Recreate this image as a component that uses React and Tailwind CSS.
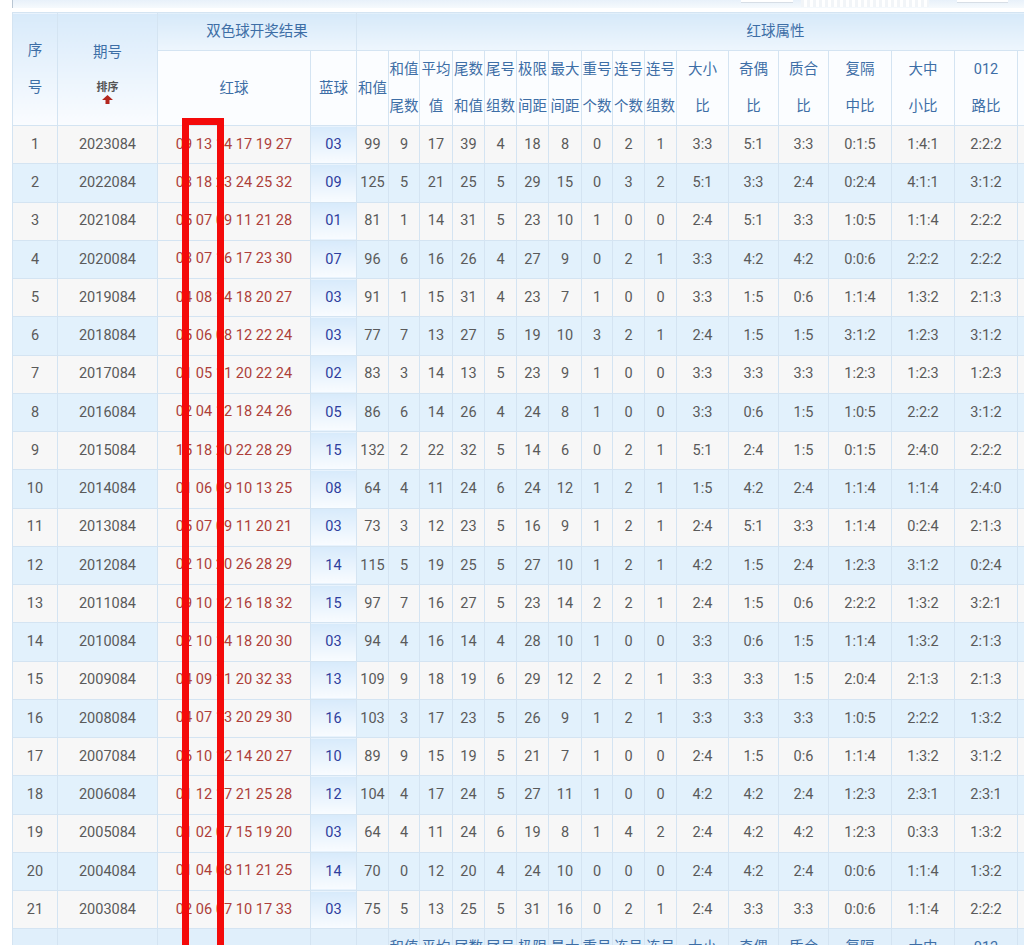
import React from "react";

const rows = [
  [1, "2023084", "09 13 14 17 19 27", "03", 99, 9, 17, 39, 4, 18, 8, 0, 2, 1, "3:3", "5:1", "3:3", "0:1:5", "1:4:1", "2:2:2"],
  [2, "2022084", "03 18 23 24 25 32", "09", 125, 5, 21, 25, 5, 29, 15, 0, 3, 2, "5:1", "3:3", "2:4", "0:2:4", "4:1:1", "3:1:2"],
  [3, "2021084", "05 07 09 11 21 28", "01", 81, 1, 14, 31, 5, 23, 10, 1, 0, 0, "2:4", "5:1", "3:3", "1:0:5", "1:1:4", "2:2:2"],
  [4, "2020084", "03 07 16 17 23 30", "07", 96, 6, 16, 26, 4, 27, 9, 0, 2, 1, "3:3", "4:2", "4:2", "0:0:6", "2:2:2", "2:2:2"],
  [5, "2019084", "04 08 14 18 20 27", "03", 91, 1, 15, 31, 4, 23, 7, 1, 0, 0, "3:3", "1:5", "0:6", "1:1:4", "1:3:2", "2:1:3"],
  [6, "2018084", "05 06 08 12 22 24", "03", 77, 7, 13, 27, 5, 19, 10, 3, 2, 1, "2:4", "1:5", "1:5", "3:1:2", "1:2:3", "3:1:2"],
  [7, "2017084", "01 05 11 20 22 24", "02", 83, 3, 14, 13, 5, 23, 9, 1, 0, 0, "3:3", "3:3", "3:3", "1:2:3", "1:2:3", "1:2:3"],
  [8, "2016084", "02 04 12 18 24 26", "05", 86, 6, 14, 26, 4, 24, 8, 1, 0, 0, "3:3", "0:6", "1:5", "1:0:5", "2:2:2", "3:1:2"],
  [9, "2015084", "15 18 20 22 28 29", "15", 132, 2, 22, 32, 5, 14, 6, 0, 2, 1, "5:1", "2:4", "1:5", "0:1:5", "2:4:0", "2:2:2"],
  [10, "2014084", "01 06 09 10 13 25", "08", 64, 4, 11, 24, 6, 24, 12, 1, 2, 1, "1:5", "4:2", "2:4", "1:1:4", "1:1:4", "2:4:0"],
  [11, "2013084", "05 07 09 11 20 21", "03", 73, 3, 12, 23, 5, 16, 9, 1, 2, 1, "2:4", "5:1", "3:3", "1:1:4", "0:2:4", "2:1:3"],
  [12, "2012084", "02 10 20 26 28 29", "14", 115, 5, 19, 25, 5, 27, 10, 1, 2, 1, "4:2", "1:5", "2:4", "1:2:3", "3:1:2", "0:2:4"],
  [13, "2011084", "09 10 12 16 18 32", "15", 97, 7, 16, 27, 5, 23, 14, 2, 2, 1, "2:4", "1:5", "0:6", "2:2:2", "1:3:2", "3:2:1"],
  [14, "2010084", "02 10 14 18 20 30", "03", 94, 4, 16, 14, 4, 28, 10, 1, 0, 0, "3:3", "0:6", "1:5", "1:1:4", "1:3:2", "2:1:3"],
  [15, "2009084", "04 09 11 20 32 33", "13", 109, 9, 18, 19, 6, 29, 12, 2, 2, 1, "3:3", "3:3", "1:5", "2:0:4", "2:1:3", "2:1:3"],
  [16, "2008084", "04 07 13 20 29 30", "16", 103, 3, 17, 23, 5, 26, 9, 1, 2, 1, "3:3", "3:3", "3:3", "1:0:5", "2:2:2", "1:3:2"],
  [17, "2007084", "06 10 12 14 20 27", "10", 89, 9, 15, 19, 5, 21, 7, 1, 0, 0, "2:4", "1:5", "0:6", "1:1:4", "1:3:2", "3:1:2"],
  [18, "2006084", "01 12 17 21 25 28", "12", 104, 4, 17, 24, 5, 27, 11, 1, 0, 0, "4:2", "4:2", "2:4", "1:2:3", "2:3:1", "2:3:1"],
  [19, "2005084", "01 02 07 15 19 20", "03", 64, 4, 11, 24, 6, 19, 8, 1, 4, 2, "2:4", "4:2", "4:2", "1:2:3", "0:3:3", "1:3:2"],
  [20, "2004084", "01 04 08 11 21 25", "14", 70, 0, 12, 20, 4, 24, 10, 0, 0, 0, "2:4", "4:2", "2:4", "0:0:6", "1:1:4", "1:3:2"],
  [21, "2003084", "02 06 07 10 17 33", "03", 75, 5, 13, 25, 5, 31, 16, 0, 2, 1, "2:4", "3:3", "3:3", "0:0:6", "1:1:4", "2:2:2"],
];

// attribute columns after 和值: two header lines + width
const attrCols = [
  ["和值", "尾数", 31],
  ["平均", "值", 33],
  ["尾数", "和值", 32],
  ["尾号", "组数", 32],
  ["极限", "间距", 32],
  ["最大", "间距", 33],
  ["重号", "个数", 31],
  ["连号", "个数", 32],
  ["连号", "组数", 32],
  ["大小", "比", 52],
  ["奇偶", "比", 50],
  ["质合", "比", 50],
  ["复隔", "中比", 63],
  ["大中", "小比", 63],
  ["012", "路比", 63],
];

// columns past the right edge of the window
const extraCols = [59, 59, 59];

const border = "border border-[#d4e4f2]";

function AttrHead({ blue }) {
  const bg = blue ? "bg-[#e0effb]" : "bg-[#fbfdff]";
  return (
    <>
      <td className={`${border} ${bg}`}>{blue ? "" : "和值"}</td>
      {attrCols.map(([a, b], i) => (
        <td key={i} className={`${border} ${bg}`}>
          <div>{a}</div>
          <div>{b}</div>
        </td>
      ))}
      {extraCols.map((w, i) => (
        <td key={"x" + i} className={`${border} ${bg}`} />
      ))}
    </>
  );
}

export default function App() {
  return (
    <div
      className="relative w-[1024px] h-[945px] overflow-hidden bg-white"
      style={{ fontFamily: 'Roboto, "Noto Sans CJK SC", sans-serif' }}
    >
      {/* cut-off toolbar above the table */}
      <div className="ml-[12px] h-[8px] flex items-start bg-linear-to-b from-[#e8f1fa] to-[#f6fafd] border-l border-[#b9c6d3]">
        <div className="ml-[728px] w-[52px] h-[3px] bg-white border-b border-[#d7dee6]" />
        <div className="ml-[8px] w-[128px] h-[7px] bg-[repeating-linear-gradient(90deg,#f2f5f8_0px,#f2f5f8_3px,#ffffff_3px,#ffffff_6px)]" />
        <div className="ml-[28px] w-[51px] h-[3px] bg-white border-b border-[#d7dee6]" />
      </div>

      <table className="mt-[4px] ml-[12px] table-fixed border-collapse w-[1182px] text-center text-[14.5px] text-[#5a5a5a]">
        <colgroup>
          <col className="w-[45px]" />
          <col className="w-[100px]" />
          <col className="w-[153px]" />
          <col className="w-[46px]" />
          <col className="w-[32px]" />
          {attrCols.map(([, , w], i) => (
            <col key={i} style={{ width: w }} />
          ))}
          {extraCols.map((w, i) => (
            <col key={"x" + i} style={{ width: w }} />
          ))}
        </colgroup>
        <thead className="text-[#3d6ea6]">
          <tr className="h-[38px]">
            <td rowSpan={2} className={`${border} bg-linear-to-b from-[#d8eafa] to-[#fafcff] leading-[37px]`}>
              <div>序</div>
              <div>号</div>
            </td>
            <td rowSpan={2} className={`${border} bg-linear-to-b from-[#d8eafa] to-[#fafcff]`}>
              <div className="leading-[37px]">期号</div>
              <div className="mt-[10px] text-[11px] leading-[14px] text-[#555] font-bold">排序</div>
              <svg className="mx-auto block" width="11" height="9" viewBox="0 0 11 9">
                <path d="M5.5 0 L11 5 L7.5 5 L7.5 9 L3.5 9 L3.5 5 L0 5 Z" fill="#b3261e" />
              </svg>
            </td>
            <td colSpan={2} className={`${border} bg-linear-to-b from-[#d6e9f9] to-[#eef6fd]`}>
              双色球开奖结果
            </td>
            <td colSpan={20} className={`${border} bg-linear-to-b from-[#d6e9f9] to-[#eef6fd]`}>
              红球属性
            </td>
          </tr>
          <tr className="h-[75px] leading-[37px]">
            <td className={`${border} bg-[#fbfdff]`}>红球</td>
            <td className={`${border} bg-[#fbfdff]`}>蓝球</td>
            <AttrHead />
          </tr>
        </thead>
        <tbody>
          {rows.map((r) => {
            const even = r[0] % 2 === 0;
            const bg = even ? "bg-[#e2f1fc]" : "bg-[#f7f7f7]";
            return (
              <tr key={r[0]} className="h-[38.25px]">
                <td className={`${border} ${bg}`}>{r[0]}</td>
                <td className={`${border} ${bg}`}>{r[1]}</td>
                <td className={`${border} bg-[#f7f7f7] text-[14.6px] text-[#ad3f3a] whitespace-nowrap`}>{r[2]}</td>
                <td className={`${border} bg-linear-to-b from-[#d7eafb] to-[#f9fcff] text-[#2f3e9e]`}>{r[3]}</td>
                {r.slice(4).map((v, i) => (
                  <td key={i} className={`${border} ${bg} whitespace-nowrap`}>
                    {v}
                  </td>
                ))}
                {extraCols.map((w, i) => (
                  <td key={"x" + i} className={`${border} ${bg}`} />
                ))}
              </tr>
            );
          })}
          {/* repeated header at the foot, only its top shows */}
          <tr className="h-[75px] leading-[37px] text-[#3d6ea6] align-top">
            <td className={`${border} bg-[#e0effb]`} />
            <td className={`${border} bg-[#e0effb]`} />
            <td className={`${border} bg-[#e0effb]`} />
            <td className={`${border} bg-[#e0effb]`} />
            <AttrHead blue />
          </tr>
        </tbody>
      </table>

      {/* red annotation frame */}
      <div className="absolute left-[182px] top-[118px] w-[42px] h-[900px] border-[7px] border-[#f40a0a]" />
    </div>
  );
}
